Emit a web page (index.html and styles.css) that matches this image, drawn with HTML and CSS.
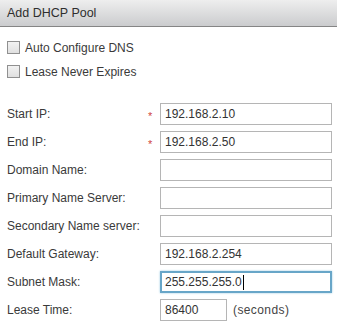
FILE: index.html
```html
<!DOCTYPE html>
<html>
<head>
<meta charset="utf-8">
<link rel="stylesheet" href="styles.css">
</head>
<body>
<div class="header">Add DHCP Pool</div>
<div class="checks">
  <label class="check"><span class="box"></span>Auto Configure DNS</label>
  <label class="check"><span class="box"></span>Lease Never Expires</label>
</div>
<div class="form">
  <span class="lbl">Start IP:</span><span class="req">*</span><span class="field">192.168.2.10</span>
  <span class="lbl">End IP:</span><span class="req">*</span><span class="field">192.168.2.50</span>
  <span class="lbl">Domain Name:</span><span class="req"></span><span class="field"></span>
  <span class="lbl">Primary Name Server:</span><span class="req"></span><span class="field"></span>
  <span class="lbl">Secondary Name server:</span><span class="req"></span><span class="field"></span>
  <span class="lbl">Default Gateway:</span><span class="req"></span><span class="field">192.168.2.254</span>
  <span class="lbl">Subnet Mask:</span><span class="req"></span><span class="field focus">255.255.255.0<span class="caret"></span></span>
  <span class="lbl">Lease Time:</span><span class="req"></span><span class="lease"><span class="field short">86400</span><span class="unit">(seconds)</span></span>
</div>
</body>
</html>
```
FILE: styles.css
```css
html, body {
  margin: 0;
  padding: 0;
  background: #fff;
  font-family: "Liberation Sans", Arial, sans-serif;
  font-size: 12px;
  color: #333;
}
.header {
  height: 27px;
  line-height: 26px;
  padding-left: 7px;
  font-size: 12.5px;
  color: #2e2e2e;
  background: linear-gradient(#eeeeee, #cbccce);
  border-bottom: 1px solid #858585;
  box-sizing: border-box;
}
.checks {
  display: flex;
  flex-direction: column;
  gap: 11px;
  padding: 14px 0 0 7px;
}
.check {
  display: flex;
  align-items: center;
  gap: 5px;
  height: 13px;
  color: #3a3a3a;
}
.box {
  width: 11px;
  height: 11px;
  border: 1px solid #909090;
  background: linear-gradient(#f2f2f2, #e0e0e0);
}
.form {
  display: grid;
  grid-template-columns: 141px 12px 172px;
  grid-auto-rows: 22px;
  row-gap: 6px;
  padding: 25px 0 0 7px;
  align-items: center;
}
.lbl {
  color: #3a3a3a;
}
.req {
  color: #d0443e;
  font-size: 11px;
  line-height: 11px;
  padding-top: 4px;
}
.field {
  display: flex;
  align-items: center;
  height: 22px;
  box-sizing: border-box;
  border: 1px solid #b5b5b5;
  padding-left: 4px;
  color: #333;
  background: #fff;
}
.field.focus {
  border: 2px solid #68a6c8;
  padding-left: 3px;
  box-shadow: 0 0 2px #9ccbe3;
}
.caret {
  display: inline-block;
  width: 1px;
  height: 15px;
  background: #000;
  margin-left: 1px;
}
.lease {
  display: flex;
  align-items: center;
  gap: 6px;
}
.field.short {
  width: 67px;
}
.unit {
  letter-spacing: 0.4px;
  color: #444;
}
```
